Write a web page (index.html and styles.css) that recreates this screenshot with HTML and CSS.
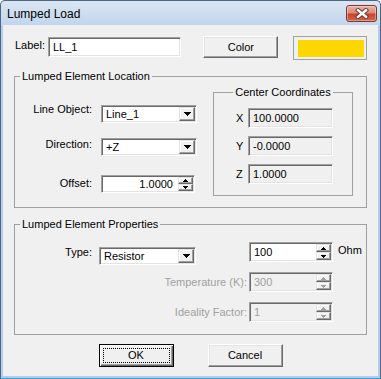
FILE: index.html
```html
<!DOCTYPE html>
<html>
<head>
<meta charset="utf-8">
<title>Lumped Load</title>
<link rel="stylesheet" href="styles.css">
</head>
<body>
<div class="window">
  <div class="titlebar">
    <span class="title">Lumped Load</span>
    <div class="close" aria-label="Close">
      <svg width="14" height="11" viewBox="0 0 14 11">
        <path d="M3 2.2 L11 8.8 M11 2.2 L3 8.8" stroke="#6b3a33" stroke-width="4.4" stroke-linecap="square"/>
        <path d="M3 2.2 L11 8.8 M11 2.2 L3 8.8" stroke="#ffffff" stroke-width="2.4" stroke-linecap="square"/>
      </svg>
    </div>
  </div>
  <div class="body">
    <div class="label-row">
      <span class="lbl">Label:</span>
      <div class="edit w-label"><span class="txt">LL_1</span></div>
      <div class="btn btn-color">Color</div>
      <div class="swatch"><div class="swatch-fill"></div></div>
    </div>

    <fieldset class="group loc">
      <legend>Lumped Element Location</legend>
      <div class="loc-inner">
        <div class="loc-form">
          <div class="frow">
            <span class="flabel r1">Line Object:</span>
            <div class="combo w-combo"><span class="txt">Line_1</span><span class="combo-btn"><svg width="7" height="4" viewBox="0 0 7 4"><path d="M0 0h7v1h-1v1h-1v1h-1v1h-1v-1h-1v-1h-1v-1h-1z" fill="#000"/></svg></span></div>
          </div>
          <div class="frow fr2">
            <span class="flabel r2">Direction:</span>
            <div class="combo w-combo"><span class="txt">+Z</span><span class="combo-btn"><svg width="7" height="4" viewBox="0 0 7 4"><path d="M0 0h7v1h-1v1h-1v1h-1v1h-1v-1h-1v-1h-1v-1h-1z" fill="#000"/></svg></span></div>
          </div>
          <div class="frow fr3">
            <span class="flabel r3">Offset:</span>
            <div class="spin w-offset">
              <span class="txt right">1.0000</span>
              <span class="spin-btns">
                <span class="sbtn"><svg width="5" height="3" viewBox="0 0 5 3"><path d="M2 0h1v1h1v1h1v1h-5v-1h1v-1h1z" fill="#000"/></svg></span>
                <span class="sbtn"><svg width="5" height="3" viewBox="0 0 5 3"><path d="M0 0h5v1h-1v1h-1v1h-1v-1h-1v-1h-1z" fill="#000"/></svg></span>
              </span>
            </div>
          </div>
        </div>

        <fieldset class="group cc">
          <legend>Center Coordinates</legend>
          <div class="cc-grid">
            <span class="cl">X</span><div class="edit ro"><span class="txt">100.0000</span></div>
            <span class="cl">Y</span><div class="edit ro"><span class="txt">-0.0000</span></div>
            <span class="cl">Z</span><div class="edit ro"><span class="txt">1.0000</span></div>
          </div>
        </fieldset>
      </div>
    </fieldset>

    <fieldset class="group props">
      <legend>Lumped Element Properties</legend>
      <div class="props-grid">
        <span class="plabel type-l">Type:</span>
        <div class="combo w-type"><span class="txt">Resistor</span><span class="combo-btn"><svg width="7" height="4" viewBox="0 0 7 4"><path d="M0 0h7v1h-1v1h-1v1h-1v1h-1v-1h-1v-1h-1v-1h-1z" fill="#000"/></svg></span></div>
        <div class="spin w-val">
          <span class="txt">100</span>
          <span class="spin-btns">
            <span class="sbtn"><svg width="5" height="3" viewBox="0 0 5 3"><path d="M2 0h1v1h1v1h1v1h-5v-1h1v-1h1z" fill="#000"/></svg></span>
            <span class="sbtn"><svg width="5" height="3" viewBox="0 0 5 3"><path d="M0 0h5v1h-1v1h-1v1h-1v-1h-1v-1h-1z" fill="#000"/></svg></span>
          </span>
        </div>
        <span class="unit">Ohm</span>

        <span class="plabel dis wide">Temperature (K):</span>
        <div class="spin w-val disabled">
          <span class="txt">300</span>
          <span class="spin-btns">
            <span class="sbtn"><svg width="5" height="3" viewBox="0 0 5 3"><path d="M2 0h1v1h1v1h1v1h-5v-1h1v-1h1z" fill="#a0a0a0"/></svg></span>
            <span class="sbtn"><svg width="5" height="3" viewBox="0 0 5 3"><path d="M0 0h5v1h-1v1h-1v1h-1v-1h-1v-1h-1z" fill="#a0a0a0"/></svg></span>
          </span>
        </div>

        <span class="plabel dis wide">Ideality Factor:</span>
        <div class="spin w-val disabled">
          <span class="txt">1</span>
          <span class="spin-btns">
            <span class="sbtn"><svg width="5" height="3" viewBox="0 0 5 3"><path d="M2 0h1v1h1v1h1v1h-5v-1h1v-1h1z" fill="#a0a0a0"/></svg></span>
            <span class="sbtn"><svg width="5" height="3" viewBox="0 0 5 3"><path d="M0 0h5v1h-1v1h-1v1h-1v-1h-1v-1h-1z" fill="#a0a0a0"/></svg></span>
          </span>
        </div>
      </div>
    </fieldset>

    <div class="actions">
      <div class="btn btn-dlg btn-default"><span class="focus">OK</span></div>
      <div class="btn btn-dlg">Cancel</div>
    </div>
  </div>
</div>
</body>
</html>
```

FILE: styles.css
```css
* { box-sizing: border-box; }
html, body { margin: 0; padding: 0; }
body {
  width: 381px;
  height: 379px;
  font-family: "Liberation Sans", Arial, sans-serif;
  font-size: 11px;
  line-height: 13px;
  color: #000;
  background: #ffffff;
}
.window {
  width: 381px;
  height: 379px;
  border: 1px solid #4d6684;
  border-bottom-color: #2f9fe0;
  border-radius: 5px 5px 0 0;
  background: linear-gradient(#dae6f3 0px, #c2d5ec 24px, #b3cdea 25px, #b3cdea 100%);
  display: flex;
  flex-direction: column;
}
.titlebar {
  height: 24px;
  display: flex;
  align-items: flex-start;
  padding-left: 6px;
}
.title {
  font-size: 12px;
  line-height: 14px;
  margin-top: 6px;
  color: #000;
}
.close {
  margin-left: auto;
  margin-right: 3px;
  margin-top: 4px;
  width: 31px;
  height: 17px;
  border: 1px solid #7a3a30;
  border-radius: 3px;
  background: linear-gradient(#e9b2a6 0%, #dc8a78 45%, #c8452e 55%, #d4644a 100%);
  box-shadow: inset 0 0 0 1px rgba(255, 255, 255, 0.35);
  display: flex;
  align-items: center;
  justify-content: center;
}
.body {
  flex: 1;
  margin: 0 2px 2px 2px;
  background: #f0f0f0;
  padding: 0 11px;
  display: flex;
  flex-direction: column;
}

/* generic controls */
.edit, .combo, .spin {
  border: 1px solid;
  border-color: #a0a0a0 #ffffff #ffffff #a0a0a0;
  box-shadow: inset 1px 1px 0 #696969, inset -1px -1px 0 #e3e3e3;
  padding: 1px;
  background: #ffffff;
  display: flex;
  align-items: center;
}
.txt { padding-left: 3px; white-space: nowrap; flex: 1; }
.txt.right { text-align: right; padding-right: 5px; }
.btn {
  display: flex;
  align-items: center;
  justify-content: center;
  border: 1px solid;
  border-color: #ffffff #696969 #696969 #ffffff;
  box-shadow: inset -1px -1px 0 #a0a0a0, inset 1px 1px 0 #e3e3e3;
  background: #f0f0f0;
}
.combo-btn, .sbtn {
  display: flex;
  align-items: center;
  justify-content: center;
  border: 1px solid;
  border-color: #e3e3e3 #696969 #696969 #e3e3e3;
  box-shadow: inset -1px -1px 0 #a0a0a0, inset 1px 1px 0 #ffffff;
  background: #f0f0f0;
}
.combo-btn { width: 16px; align-self: stretch; }
.combo-btn svg, .sbtn svg { display: block; }
.spin-btns {
  display: flex;
  flex-direction: column;
  width: 15px;
  align-self: stretch;
}
.sbtn { flex: 1; }

/* label row */
.label-row {
  display: flex;
  align-items: flex-start;
  height: 24px;
  margin-top: 11px;
  padding-left: 1px;
}
.lbl { width: 33px; margin-top: 3px; }
.w-label { width: 134px; height: 20px; margin-top: 1px; }
.btn-color { width: 75px; height: 22px; margin-left: 22px; }
.swatch {
  width: 74px;
  height: 24px;
  margin-left: 15px;
  border: 1px solid #a0a0a0;
  padding: 3px 2px 2px 4px;
}
.swatch-fill { height: 100%; background: #ffd700; }

/* group boxes */
.group {
  margin: 0;
  padding: 0;
  min-width: 0;
  border: 1px solid #a0a0a0;
}
.group > legend {
  padding: 0 2px;
  margin-left: 5px;
  line-height: 13px;
}
.loc { margin-top: 10px; }
.loc-inner { display: flex; align-items: flex-start; }
.loc-form { padding-top: 22px; padding-bottom: 14px; }
.frow { display: flex; align-items: flex-start; height: 18px; }
.fr2 { margin-top: 15px; }
.fr3 { margin-top: 19px; }
.flabel { width: 77px; margin-right: 9px; text-align: right; }
.r1 { margin-top: -2px; }
.r2 { margin-top: 0; }
.r3 { margin-top: 2px; }
.w-combo { width: 96px; height: 18px; }
.w-offset { width: 94px; height: 18px; }

.cc {
  width: 140px;
  margin: 3px 13px 11px auto;
}
.cc > legend { margin-left: auto; margin-right: auto; }
.cc-grid {
  display: grid;
  grid-template-columns: 12px 85px;
  grid-auto-rows: 20px;
  row-gap: 8px;
  padding: 9px 19px 11px 22px;
}
.cl { align-self: center; }
.edit.ro { background: #f0f0f0; height: 20px; }

/* properties */
.props { margin-top: 10px; }
.props-grid {
  display: grid;
  grid-template-columns: 84px 150px 84px 1fr;
  grid-auto-rows: 20px;
  row-gap: 10px;
  padding: 11px 0 12px 0;
}
.plabel { margin-top: 4px; text-align: right; white-space: nowrap; }
.type-l { grid-column: 1; padding-right: 7px; }
.wide { grid-column: 1 / span 2; padding-right: 2px; }
.dis { color: #a0a0a0; }
.w-type { grid-column: 2; justify-self: start; width: 97px; height: 18px; margin-top: 5px; }
.w-val { grid-column: 3; width: 84px; height: 20px; }
.spin.disabled { background: #f0f0f0; color: #a0a0a0; }
.unit { grid-column: 4; margin-left: 5px; margin-top: 2px; }

/* dialog buttons */
.actions {
  display: flex;
  justify-content: center;
  gap: 34px;
  margin-top: 9px;
}
.btn-dlg { width: 75px; height: 23px; }
.btn-default {
  border: 1px solid #000;
  box-shadow: inset 1px 1px 0 #ffffff, inset -1px -1px 0 #696969, inset -2px -2px 0 #a0a0a0;
  align-items: stretch;
  justify-content: stretch;
}
.focus {
  flex: 1;
  margin: 3px;
  border: 1px dotted #000;
  display: flex;
  align-items: center;
  justify-content: center;
}
```
